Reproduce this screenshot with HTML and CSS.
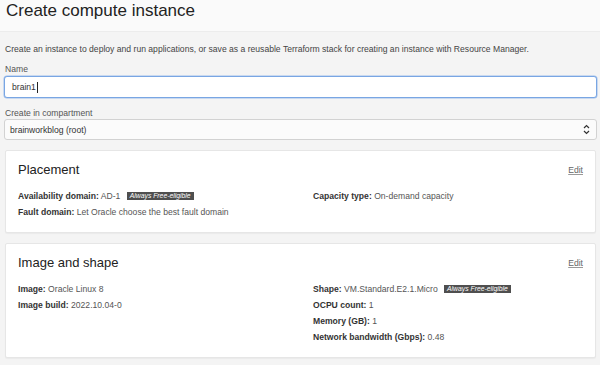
FILE: index.html
```html
<!DOCTYPE html>
<html lang="en">
<head>
<meta charset="utf-8">
<title>Create compute instance</title>
<link rel="stylesheet" href="styles.css">
</head>
<body>
<header class="header">
  <h1 class="title">Create compute instance</h1>
</header>
<main class="main">
  <p class="desc">Create an instance to deploy and run applications, or save as a reusable Terraform stack for creating an instance with Resource Manager.</p>
  <label class="label">Name</label>
  <div class="input input--focus"><span class="input-text">brain1</span><span class="caret"></span></div>
  <label class="label label--gap">Create in compartment</label>
  <div class="select">
    <span class="input-text">brainworkblog (root)</span>
    <svg class="chev" width="7" height="11" viewBox="0 0 7 11"><path d="M1 4 L3.5 1.5 L6 4 M1 7 L3.5 9.5 L6 7" fill="none" stroke="#333" stroke-width="1.2"/></svg>
  </div>

  <section class="card">
    <div class="card-head">
      <h2 class="card-title">Placement</h2>
      <a class="edit">Edit</a>
    </div>
    <div class="grid">
      <div class="col">
        <div class="row"><b>Availability domain:</b> AD-1 <span class="badge">Always Free-eligible</span></div>
        <div class="row"><b>Fault domain:</b> Let Oracle choose the best fault domain</div>
      </div>
      <div class="col">
        <div class="row"><b>Capacity type:</b> On-demand capacity</div>
      </div>
    </div>
  </section>

  <section class="card">
    <div class="card-head">
      <h2 class="card-title">Image and shape</h2>
      <a class="edit">Edit</a>
    </div>
    <div class="grid">
      <div class="col">
        <div class="row"><b>Image:</b> Oracle Linux 8</div>
        <div class="row"><b>Image build:</b> 2022.10.04-0</div>
      </div>
      <div class="col">
        <div class="row"><b>Shape:</b> VM.Standard.E2.1.Micro <span class="badge">Always Free-eligible</span></div>
        <div class="row"><b>OCPU count:</b> 1</div>
        <div class="row"><b>Memory (GB):</b> 1</div>
        <div class="row"><b>Network bandwidth (Gbps):</b> 0.48</div>
      </div>
    </div>
  </section>
</main>
</body>
</html>
```

FILE: styles.css
```css
* { box-sizing: border-box; }
html, body { margin: 0; padding: 0; }
body {
  background: #f4f4f4;
  font-family: "Liberation Sans", Arial, sans-serif;
  color: #333;
  width: 600px;
  height: 365px;
  overflow: hidden;
}
.header {
  height: 32px;
  background: #fafafa;
  border-bottom: 1px solid #ececec;
  padding: 1px 0 0 6px;
}
.title {
  margin: 0;
  font-size: 17px;
  font-weight: normal;
  line-height: 19px;
  color: #222;
}
.main {
  padding: 11px 3px 0 4px;
}
.desc {
  margin: 0;
  font-size: 8.6px;
  line-height: 12px;
  color: #444;
  padding-left: 1px;
}
.label {
  display: block;
  margin-top: 8px;
  padding-left: 1px;
  font-size: 8.6px;
  line-height: 12px;
  color: #555;
}
.label--gap { margin-top: 9px; }
.input {
  margin-top: 1px;
  height: 22px;
  border: 1px solid #c9c9c9;
  border-radius: 3px;
  background: #fff;
  display: flex;
  align-items: center;
  padding-left: 7px;
}
.input--focus {
  border-color: #79a6e3;
  box-shadow: 0 0 0 0.5px #9dbdeb;
}
.input-text {
  font-size: 8.6px;
  color: #333;
}
.caret {
  display: inline-block;
  width: 1px;
  height: 11px;
  background: #222;
  margin-left: 1px;
}
.select {
  height: 21px;
  border: 1px solid #d2d2d2;
  border-radius: 3px;
  background: #fbfbfb;
  display: flex;
  align-items: center;
  justify-content: space-between;
  padding: 0 6px 0 5px;
}
.chev { display: block; }
.card {
  margin: 10px 1px 0 1px;
  background: #fff;
  border: 1px solid #e6e6e6;
  border-radius: 2px;
  box-shadow: 0 1px 1px rgba(0,0,0,0.04);
  padding: 11px 12px 12px 12px;
}
.card-head {
  display: flex;
  align-items: center;
  justify-content: space-between;
  height: 16px;
  margin-bottom: 10px;
}
.card-title {
  margin: 0;
  font-size: 13px;
  font-weight: normal;
  line-height: 16px;
  color: #222;
}
.edit {
  font-size: 8.6px;
  color: #666;
  text-decoration: underline;
  text-decoration-color: #999;
}
.grid {
  display: grid;
  grid-template-columns: 1fr 1fr;
  column-gap: 25px;
}
.row {
  font-size: 8.6px;
  line-height: 16px;
  color: #555;
  white-space: nowrap;
}
.row b {
  color: #333;
  font-weight: bold;
}
.badge {
  display: inline-block;
  margin-left: 4px;
  background: #4f4f4f;
  color: #fff;
  font-style: italic;
  font-size: 6.8px;
  line-height: 8px;
  padding: 0 3px;
  vertical-align: 1px;
}
```
